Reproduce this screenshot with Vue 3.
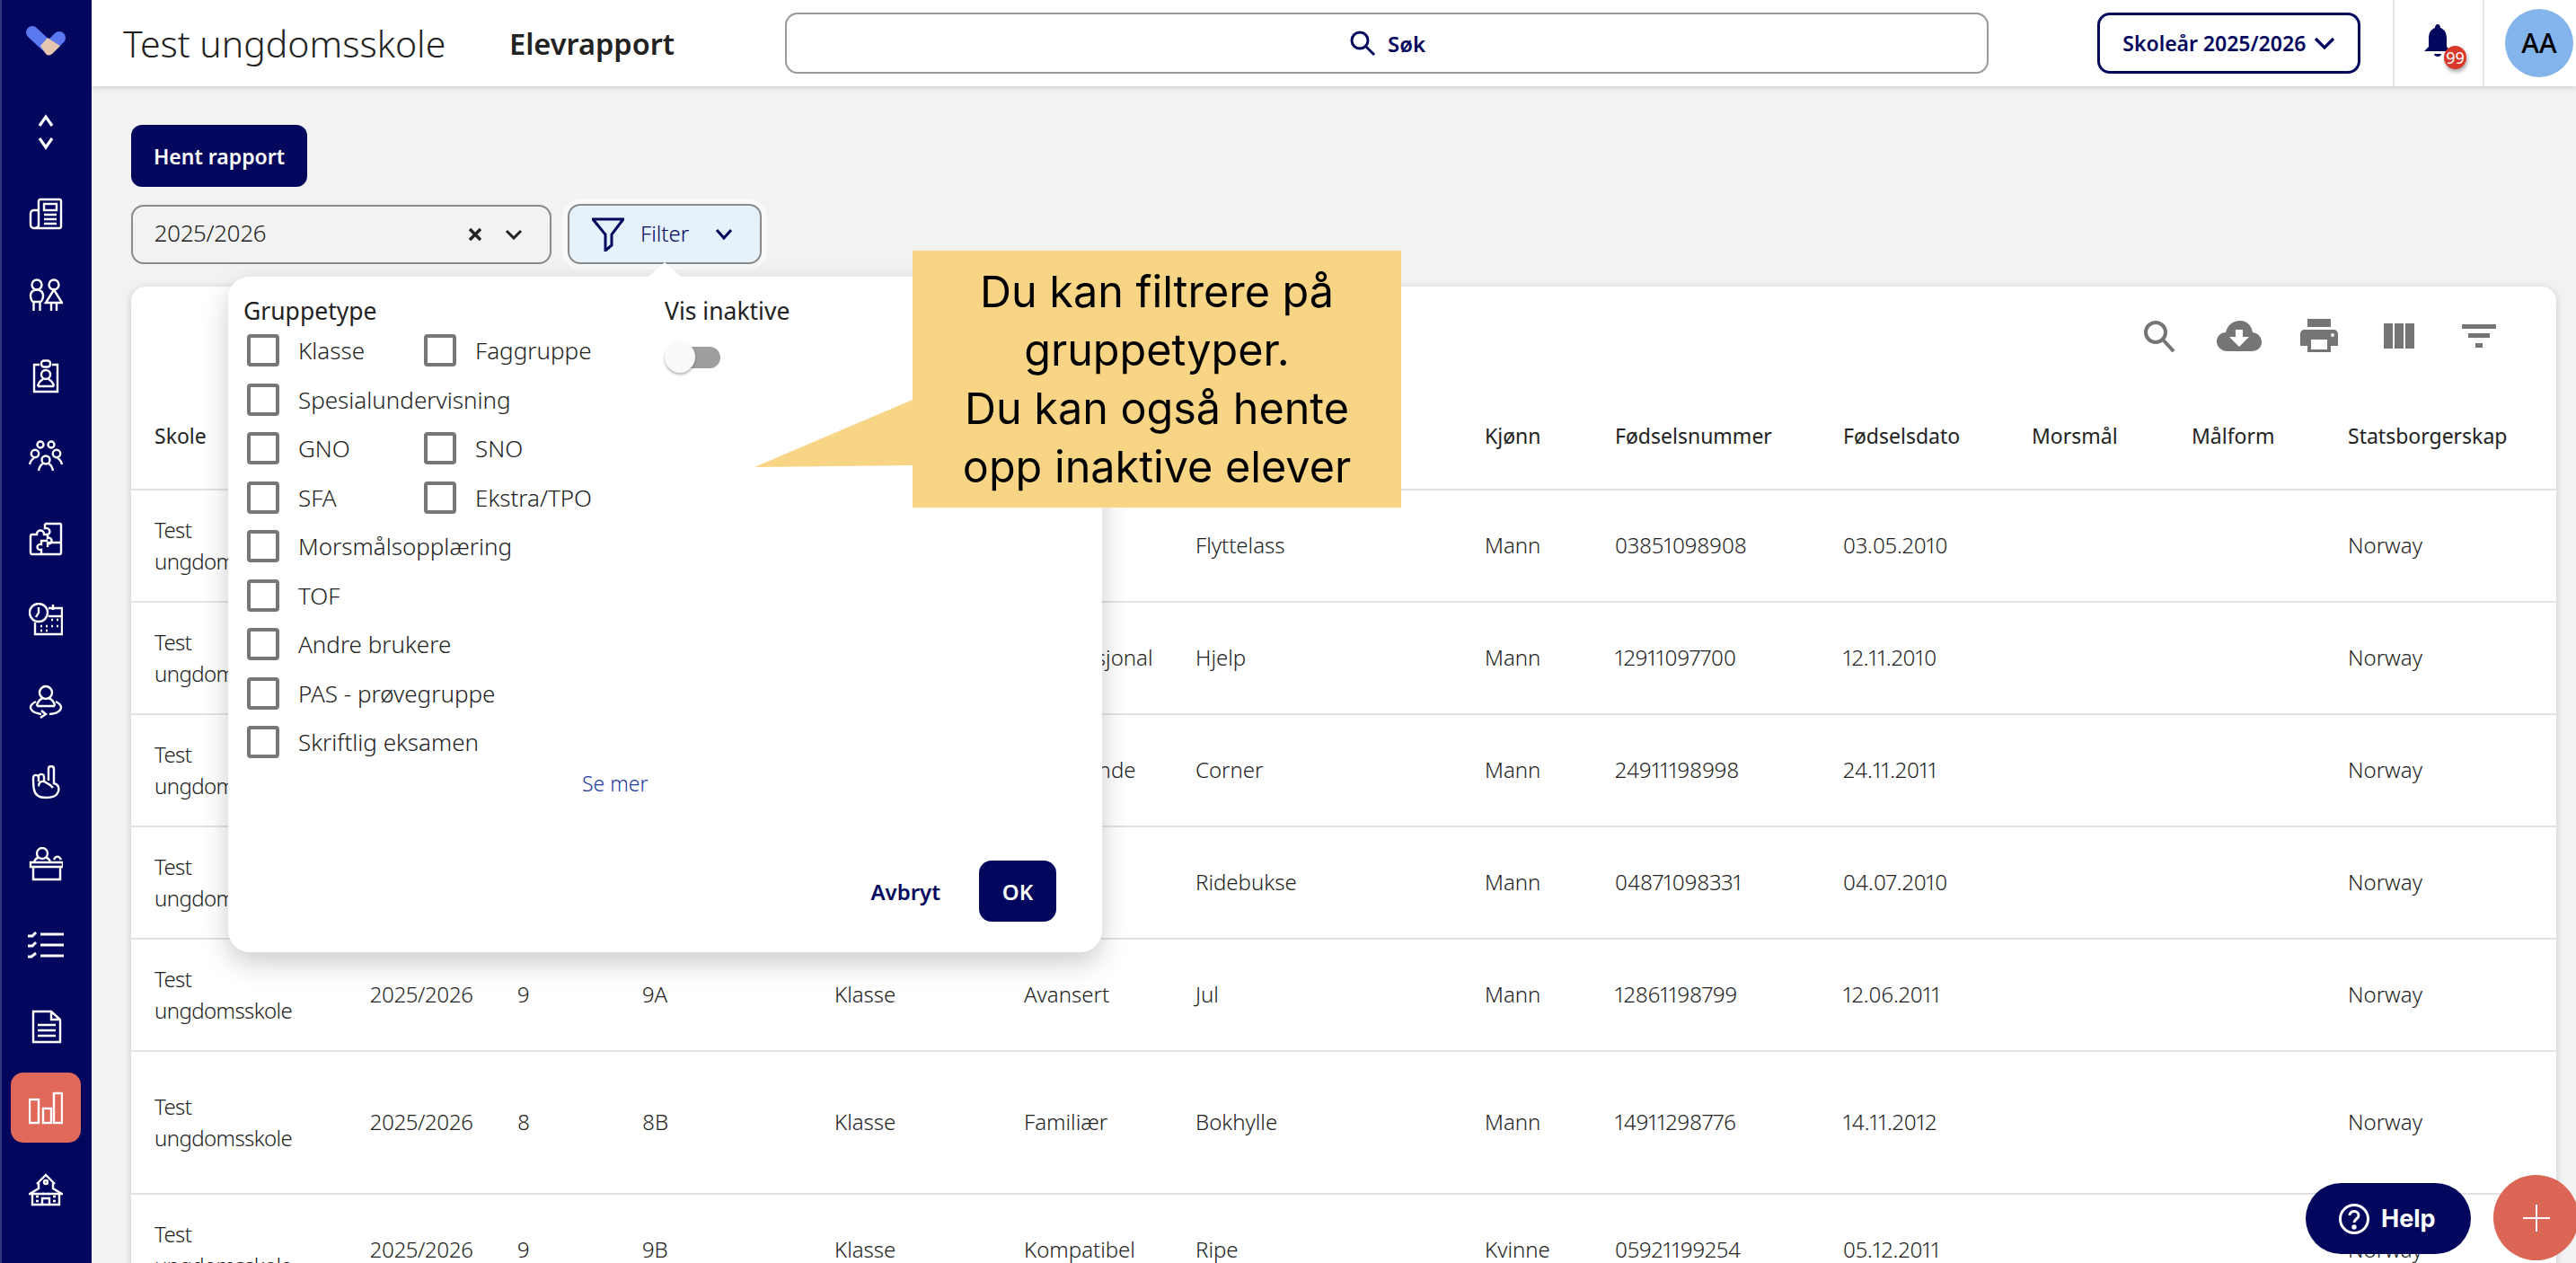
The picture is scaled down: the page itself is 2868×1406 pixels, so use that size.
<script setup>
const checkRows = [
  ['Klasse', 'Faggruppe'],
  ['Spesialundervisning'],
  ['GNO', 'SNO'],
  ['SFA', 'Ekstra/TPO'],
  ['Morsmålsopplæring'],
  ['TOF'],
  ['Andre brukere'],
  ['PAS - prøvegruppe'],
  ['Skriftlig eksamen'],
]
const heads = ['Skole', 'Skoleår', 'Trinn', 'Klasse', 'Gruppetype', 'Fornavn', 'Elevens etternavns', 'Kjønn', 'Fødselsnummer', 'Fødselsdato', 'Morsmål', 'Målform', 'Statsborgerskap']
const rows = [
  ['9', '9A', 'Klasse', 'Rask', 'Flyttelass', 'Mann', '03851098908', '03.05.2010'],
  ['9', '9B', 'Klasse', 'Internasjonal', 'Hjelp', 'Mann', '12911097700', '12.11.2010'],
  ['8', '8A', 'Klasse', 'Spennende', 'Corner', 'Mann', '24911198998', '24.11.2011'],
  ['9', '9A', 'Klasse', 'Digital', 'Ridebukse', 'Mann', '04871098331', '04.07.2010'],
  ['9', '9A', 'Klasse', 'Avansert', 'Jul', 'Mann', '12861198799', '12.06.2011'],
  ['8', '8B', 'Klasse', 'Familiær', 'Bokhylle', 'Mann', '14911298776', '14.11.2012'],
  ['9', '9B', 'Klasse', 'Kompatibel', 'Ripe', 'Kvinne', '05921199254', '05.12.2011'],
]
</script>

<template>
  <div class="app">
    <aside class="side">
      <div class="logo">
        <svg width="44" height="34" viewBox="0 0 44 34" fill="none">
          <path d="M7 7 L23 22" stroke="#5b78f0" stroke-width="14" stroke-linecap="round" />
          <path d="M37 13 L27 23" stroke="#5b78f0" stroke-width="14" stroke-linecap="round" />
          <path d="M16 22 L24 13 L30 17 L38 22 L29 31 Q25 34 22 31Z" fill="#e6c6b0" />
        </svg>
      </div>
      <div class="nav">
        <div class="nav-item">
          <svg width="20" height="40" viewBox="0 0 20 40" fill="none" stroke="#fff" stroke-width="3.200"><path d="M3 13 L10 3 L17 13" /><path d="M3 27 L10 37 L17 27" /></svg>
        </div>
        <div class="nav-item">
          <svg class="ic" viewBox="0 0 38 38"><path d="M11 33 V5 Q11 3 13 3 H34 Q36 3 36 5 V33 Q36 35 34 35 H6 Q2 35 2 31 V19 Q2 15 6 15 H11 M11 31 Q11 35 6 35" /><rect x="17" y="8" width="14" height="7" /><path d="M17 20 H31 M17 25 H31 M17 30 H31" /></svg>
        </div>
        <div class="nav-item">
          <svg class="ic" viewBox="0 0 38 38"><circle cx="9" cy="8" r="5.500" /><path d="M9 13.500 C4 13.500 2 17 2 20 C2 24 4 27 5 27 H13 C14 27 16 24 16 20 C16 17 14 13.500 9 13.500Z M5.500 27 V37 M12.500 27 V37" /><circle cx="28" cy="8" r="5.500" /><path d="M28 13.500 L19 28 H37Z M25 28 V37 M31 28 V37" /></svg>
        </div>
        <div class="nav-item">
          <svg class="ic" viewBox="0 0 38 38"><path d="M12 6 H6 V36 H32 V6 H26" /><rect x="14" y="1.500" width="10" height="7" rx="3" /><circle cx="19" cy="17" r="5" /><path d="M10 30 C11 24 15 23 16 22 M28 30 C27 24 23 23 22 22 M10 30 H28" /></svg>
        </div>
        <div class="nav-item">
          <svg class="ic" viewBox="0 0 38 38"><circle cx="13" cy="5" r="3.500" /><circle cx="25" cy="5" r="3.500" /><circle cx="7" cy="15" r="4.200" /><circle cx="31" cy="15" r="4.200" /><circle cx="19" cy="22" r="4.500" /><path d="M1 27 C2 23 4 21 6 20 M37 27 C36 23 34 21 32 20 M11 34 C12 29 14 27 16 26 M27 34 C26 29 24 27 22 26" /></svg>
        </div>
        <div class="nav-item">
          <svg class="ic" viewBox="0 0 38 38"><path d="M18 2 H35 Q36 2 36 4 V34 Q36 36 34 36 H4 Q2 36 2 34 V16 Q2 14 4 14 H9 C9 8 17 8 17 14 H21 V18 C27 16 27 26 21 24 V28 M18 2 V7 C25 6 25 15 19 14 M21 23 H36 M14 36 V31 C8 32 8 24 14 25 V21 H21" /></svg>
        </div>
        <div class="nav-item">
          <svg class="ic" viewBox="0 0 38 38"><circle cx="11" cy="11" r="10" /><path d="M11 5 V11 L8 16" /><path d="M22 6 H37 V35 H7 V22 M27 2 V8" /><path d="M22 15 H37" /><path d="M13 26 H15 M19 26 H21 M25 26 H27 M31 26 H33 M25 19 H27 M31 19 H33 M13 31 H15 M19 31 H21" /></svg>
        </div>
        <div class="nav-item">
          <svg class="ic" viewBox="0 0 38 38"><circle cx="19" cy="9" r="7" /><path d="M9 24 C10 17 14 16 16 15 M29 24 C28 17 24 16 22 15 M9 24 H29" /><path d="M8 19 C-2 24 1 31 14 33 M14 29 L19 33 L13 37" /><path d="M30 19 C40 24 37 32 23 33" /></svg>
        </div>
        <div class="nav-item">
          <svg class="ic" viewBox="0 0 38 38"><path d="M22 17 V4 C22 0 28 0 28 4 V20 C33 21 35 26 32 31 C30 35 26 36 19 36 C11 36 7 33 6 27 C5 24 5 18 5 14 C5 10 10 10 11 13 V12 C12 9 17 9 17 13 V18 C12 17 10 22 12 23 M11 13 V18 M17 18 C21 20 24 21 27 25" /></svg>
        </div>
        <div class="nav-item">
          <svg class="ic" viewBox="0 0 38 38"><circle cx="15" cy="7" r="6" /><path d="M6 17 C7 13 9 12 11 12 M24 17 C23 13 21 12 19 12 M28 14 C30 9 34 10 36 14" /><path d="M2 17 H38 V22 H2Z M5 22 V36 H35 V22" /></svg>
        </div>
        <div class="nav-item">
          <svg class="ic wide" viewBox="0 0 42 30"><path d="M15 3 H41 M15 15 H41 M15 27 H41" /><path d="M1 5 H6 L10 1 M1 16 H6 L10 12 M1 28 H5 L10 24" /></svg>
        </div>
        <div class="nav-item">
          <svg class="ic" viewBox="0 0 38 38"><path d="M5 2 H25 L35 11 V36 H5Z M25 2 V11 H35" /><path d="M10 17 H30 M10 23 H30 M10 29 H30" /></svg>
        </div>
        <div class="nav-item">
          <div class="active-bg">
            <svg class="ic" viewBox="0 0 38 38"><rect x="1" y="10" width="10" height="26" /><rect x="16" y="20" width="9" height="16" /><rect x="28" y="3" width="9" height="33" /></svg>
          </div>
        </div>
        <div class="nav-item">
          <svg class="ic" viewBox="0 0 38 38"><path d="M9 13 L19 3 L29 13 M11 12 V18 L1 24 H37 L27 18 V12" /><circle cx="19" cy="11" r="2" /><path d="M4 24 V36 H34 V24 M15 36 V29 H23 V36" /><path d="M8 27 H11 M8 32 H11 M27 27 H30 M27 32 H30 M15 24 H17 M21 24 H23" /></svg>
        </div>
      </div>
    </aside>

    <div class="content">
      <header class="top">
        <div class="school">Test ungdomsskole</div>
        <div class="page">Elevrapport</div>
        <div class="search">
          <svg width="32" height="32" viewBox="0 0 32 32" fill="none" stroke="#02075d" stroke-width="3"><circle cx="13" cy="13" r="9" /><path d="M20 20 L29 29" /></svg>
          <span>Søk</span>
        </div>
        <div class="year">
          <span>Skoleår 2025/2026</span>
          <svg width="24" height="14" viewBox="0 0 24 14" fill="none" stroke="#02075d" stroke-width="3.200"><path d="M2 2 L12 12 L22 2" /></svg>
        </div>
        <div class="bell-box">
          <svg width="32" height="40" viewBox="0 0 32 40" fill="#02075d"><path d="M16 1 C18 1 19 3 19 5 C24 7 26 11 26 17 V26 L31 31 H1 L6 26 V17 C6 11 8 7 13 5 C13 3 14 1 16 1Z" /><path d="M12 34 H20 C20 38 12 38 12 34Z" /></svg>
          <span class="badge">99</span>
        </div>
        <div class="avatar-box"><div class="avatar">AA</div></div>
      </header>

      <main class="main">
        <button class="btn-primary">Hent rapport</button>
        <div class="filters">
          <div class="select">
            <span class="select-value">2025/2026</span>
            <svg width="16" height="16" viewBox="0 0 16 16" fill="none" stroke="#222" stroke-width="3.400"><path d="M2 2 L14 14 M14 2 L2 14" /></svg>
            <svg width="20" height="12" viewBox="0 0 20 12" fill="none" stroke="#222" stroke-width="3"><path d="M2 2 L10 10 L18 2" /></svg>
          </div>
          <div class="filter-btn">
            <svg width="36" height="38" viewBox="0 0 36 38" fill="none" stroke="#02075d" stroke-width="3"><path d="M1 2 H35 L22 19 V31 L15 37 V19 Z" /></svg>
            <span>Filter</span>
            <svg width="20" height="14" viewBox="0 0 20 14" fill="none" stroke="#02075d" stroke-width="3"><path d="M2 2 L10 11 L18 2" /></svg>
          </div>
        </div>

        <section class="card">
          <div class="toolbar">
            <div class="tool"><svg width="36" height="36" viewBox="0 0 36 36" fill="none" stroke="#757575" stroke-width="4"><circle cx="14" cy="14" r="11" /><path d="M22 22 L34 35" /></svg></div>
            <div class="tool"><svg width="50" height="34" viewBox="0 0 50 34" fill="#757575"><path d="M12 34 C5 34 0 29 0 23 C0 17 5 13 10 13 C12 5 18 0 26 0 C34 0 39 6 40 13 C46 14 50 18 50 24 C50 30 45 34 39 34Z" /><path d="M21 10 H29 V18 H36 L25 29 L14 18 H21Z" fill="#fff" /></svg></div>
            <div class="tool"><svg width="42" height="38" viewBox="0 0 42 38" fill="#757575"><rect x="8" y="0" width="26" height="9" /><path d="M5 12 H37 C40 12 42 14 42 17 V30 H34 V37 H8 V30 H0 V17 C0 14 2 12 5 12Z" /><rect x="12" y="23" width="18" height="11" fill="#fff" /><circle cx="36" cy="18" r="2" fill="#fff" /></svg></div>
            <div class="tool"><svg width="34" height="28" viewBox="0 0 34 28" fill="#757575"><rect x="0" y="0" width="10" height="28" /><rect x="12" y="0" width="10" height="28" /><rect x="24" y="0" width="10" height="28" /></svg></div>
            <div class="tool"><svg width="38" height="26" viewBox="0 0 38 26" fill="#757575"><rect x="0" y="0" width="38" height="5" /><rect x="7" y="10" width="24" height="5" /><rect x="15" y="21" width="8" height="5" /></svg></div>
          </div>
          <div class="t-row t-head">
            <div v-for="h in heads" :key="h" class="cell">{{ h }}</div>
          </div>
          <div v-for="(r, i) in rows" :key="i" class="t-row t-body" :class="{ tall: i === 5 }">
            <div class="cell school-cell">Test<br />ungdomsskole</div>
            <div class="cell">2025/2026</div>
            <div v-for="(v, j) in r" :key="j" class="cell">{{ v }}</div>
            <div class="cell"></div>
            <div class="cell"></div>
            <div class="cell">Norway</div>
          </div>
        </section>
      </main>
    </div>

    <div class="popover">
      <span class="pop-arrow"></span>
      <div class="pop-body">
        <div class="pop-groups">
          <div class="pop-title">Gruppetype</div>
          <div class="checks">
            <div v-for="(row, i) in checkRows" :key="i" class="check-row">
              <label v-for="c in row" :key="c" class="check"><span class="box"></span><span>{{ c }}</span></label>
            </div>
          </div>
        </div>
        <div class="pop-inactive">
          <div class="pop-title">Vis inaktive</div>
          <div class="toggle"><span class="knob"></span></div>
        </div>
      </div>
      <a class="more">Se mer</a>
      <div class="pop-foot">
        <span class="cancel">Avbryt</span>
        <button class="ok">OK</button>
      </div>
    </div>

    <svg class="callout-tail" width="180" height="80" viewBox="0 0 180 80"><path d="M176 0 L0 75 L176 73Z" fill="#f8d584" /></svg>
    <div class="callout">Du kan filtrere på<br />gruppetyper.<br />Du kan også hente<br />opp inaktive elever</div>

    <div class="help">
      <svg width="36" height="36" viewBox="0 0 36 36" fill="none" stroke="#fff" stroke-width="3"><circle cx="18" cy="18" r="15.500" /><path d="M13 14 C13 8 23 8 23 14 C23 18 18 18 18 22" /><circle cx="18" cy="27" r="1.200" fill="#fff" /></svg>
      <span>Help</span>
    </div>
    <div class="fab">
      <svg width="32" height="32" viewBox="0 0 32 32" stroke="#fff" stroke-width="2"><path d="M1 16 H31 M16 1 V31" /></svg>
    </div>
  </div>
</template>

<style>
html, body { margin: 0; background: #f2f2f2; overflow: hidden; }
</style>

<style scoped>
.app {
  position: relative;
  display: flex;
  width: 2868px;
  height: 1406px;
  overflow: hidden;
  background: #f2f2f2;
  font-family: "Noto Sans", sans-serif;
  font-variant-numeric: proportional-nums;
  color: #222;
}
.side {
  flex: none;
  width: 102px;
  box-sizing: border-box;
  background: #02075d;
  border-left: 2px solid #33367f;
  display: flex;
  flex-direction: column;
  z-index: 3;
}
.logo { height: 102px; display: flex; justify-content: center; padding-top: 29px; box-sizing: border-box; margin-left: -2px; }
.nav-item { height: 90.500px; display: flex; align-items: center; justify-content: center; margin-left: -2px; }
.ic { width: 38px; height: 38px; fill: none; stroke: #fff; stroke-width: 2.400; }
.ic.wide { width: 42px; height: 30px; stroke-width: 3; }
.active-bg { width: 78px; height: 78px; border-radius: 14px; background: #e0695a; display: flex; align-items: center; justify-content: center; }

.content { flex: 1; min-width: 0; display: flex; flex-direction: column; }
.top {
  height: 96px;
  flex: none;
  background: #fff;
  box-shadow: 0 2px 6px rgba(0,0,0,.14);
  display: flex;
  align-items: center;
  position: relative;
  z-index: 2;
}
.school { width: 430px; margin-left: 35px; font-size: 41px; font-weight: 300; color: #222; white-space: nowrap; }
.page { width: 307px; font-size: 32.500px; font-weight: 600; color: #222; }
.search {
  width: 1340px;
  height: 68px;
  box-sizing: border-box;
  border: 2px solid #999;
  border-radius: 14px;
  display: flex;
  align-items: center;
  justify-content: center;
  gap: 12px;
  color: #02075d;
  font-size: 24px;
  font-weight: 600;
}
.year {
  margin-left: 121px;
  width: 293px;
  height: 68px;
  box-sizing: border-box;
  border: 3px solid #02075d;
  border-radius: 14px;
  display: flex;
  align-items: center;
  justify-content: center;
  gap: 8px;
  color: #02075d;
  font-size: 23px;
  font-weight: 600;
}
.bell-box {
  margin-left: 36px;
  width: 102px;
  height: 96px;
  box-sizing: border-box;
  border-left: 2px solid #e4e4e4;
  border-right: 2px solid #e4e4e4;
  position: relative;
  padding: 26px 0 0 32px;
}
.badge {
  position: absolute;
  left: 55px;
  top: 51px;
  width: 25px;
  height: 26px;
  border-radius: 50%;
  background: #d9392b;
  color: #fff;
  font-size: 18px;
  line-height: 26px;
  text-align: center;
  box-shadow: 1px 3px 4px rgba(0,0,0,.35);
}
.avatar-box { flex: 1; display: flex; justify-content: flex-end; padding-right: 3px; }
.avatar {
  width: 76px;
  height: 76px;
  border-radius: 50%;
  background: #84b4ec;
  color: #000;
  font-size: 30px;
  font-weight: 500;
  line-height: 76px;
  text-align: center;
}

.main { padding: 43px 22px 0 44px; }
.btn-primary {
  display: block;
  width: 196px;
  height: 69px;
  border: 0;
  border-radius: 12px;
  background: #02075d;
  color: #fff;
  font: 600 23px "Noto Sans", sans-serif;
  padding: 0;
}
.filters { display: flex; gap: 18px; margin-top: 19px; align-items: center; }
.select {
  width: 468px;
  height: 66px;
  box-sizing: border-box;
  border: 2px solid #8a8a8a;
  border-radius: 14px;
  display: flex;
  align-items: center;
  padding: 0 30px 3px 24px;
  gap: 25px;
  font-size: 26px;
  font-weight: 300;
}
.select svg { margin-top: 3px; }
.select-value { flex: 1; }
.filter-btn {
  width: 216px;
  height: 67px;
  box-sizing: border-box;
  border: 2px solid #8a8a8a;
  border-radius: 14px;
  background: #e6f2fb;
  box-shadow: 0 0 0 6px #f8f8f8;
  display: flex;
  align-items: center;
  padding: 0 30px 0 25px;
  color: #02075d;
  font-size: 24px;
  font-weight: 300;
}
.filter-btn span { margin-left: 18px; flex: 1; padding-bottom: 3px; }

.card {
  margin-top: 25px;
  background: #fff;
  border-radius: 16px 16px 0 0;
  box-shadow: 0 2px 8px rgba(0,0,0,.18);
  height: 1100px;
}
.toolbar { height: 108px; box-sizing: border-box; padding: 33px 42px 0 0; display: flex; justify-content: flex-end; }
.tool { width: 89px; height: 44px; display: flex; align-items: center; justify-content: center; }
.t-row {
  display: grid;
  grid-template-columns: 240px 164px 139px 214px 211px 191px 322px 145px 254px 210px 178px 174px 206px;
  height: 125px;
  box-sizing: border-box;
  padding-left: 26px;
  border-bottom: 2px solid #e2e2e2;
  align-items: center;
  font-size: 24px;
  line-height: 35px;
  font-weight: 300;
  color: #222;
}
.t-body { padding-bottom: 2px; }
.t-row.tall { height: 159px; }
.t-head { height: 119px; font-size: 23px; font-weight: 400; white-space: nowrap; }
.school-cell { letter-spacing: -0.600px; }

.popover {
  position: absolute;
  left: 254px;
  top: 308px;
  width: 973px;
  height: 752px;
  box-sizing: border-box;
  background: #fff;
  border-radius: 24px;
  box-shadow: 0 12px 30px rgba(0,0,0,.2);
  padding: 20px 51px 34px 17px;
  display: flex;
  flex-direction: column;
  z-index: 4;
}
.pop-arrow {
  position: absolute;
  left: 468px;
  top: -16px;
  width: 36px;
  height: 16px;
  background: #fff;
  clip-path: polygon(50% 0, 100% 100%, 0 100%);
}
.pop-body { display: flex; }
.pop-groups { width: 469px; }
.pop-title { font-size: 26.500px; line-height: 36px; font-weight: 400; color: #222; height: 44px; }
.checks { padding-left: 4px; }
.check-row { display: flex; height: 54.500px; }
.check { display: flex; width: 197px; height: 36px; white-space: nowrap; align-items: center; font-size: 26px; font-weight: 300; gap: 21px; }
.box { flex: none; width: 36px; height: 36px; box-sizing: border-box; border: 4px solid #767676; border-radius: 4px; }
.toggle { position: relative; width: 62px; height: 36px; margin-top: 8px; }
.toggle::before { content: ""; position: absolute; left: 6px; right: 0; top: 6px; height: 24px; border-radius: 12px; background: #9e9e9e; }
.knob { position: absolute; left: 0; top: 0; width: 34px; height: 35px; border-radius: 50%; background: #fafafa; box-shadow: 0 2px 3px rgba(0,0,0,.3); }
.more { display: block; margin: -9px 0 0 377px; color: #1f3a9e; font-size: 23px; font-weight: 300; line-height: 36px; }
.pop-foot { margin-top: auto; display: flex; justify-content: flex-end; align-items: center; gap: 43px; }
.cancel { color: #02075d; font-size: 24px; font-weight: 600; }
.ok { width: 86px; height: 68px; border: 0; border-radius: 14px; background: #02075d; color: #fff; font: 600 24px "Noto Sans", sans-serif; padding: 0; }

.callout-tail { position: absolute; left: 840px; top: 445px; z-index: 5; }
.callout {
  position: absolute;
  left: 1016px;
  top: 279px;
  width: 544px;
  height: 286px;
  box-sizing: border-box;
  padding-top: 13px;
  background: #f8d584;
  color: #000;
  font-family: Inter, sans-serif;
  font-size: 48.500px;
  line-height: 65px;
  text-align: center;
  z-index: 5;
}

.help {
  position: absolute;
  left: 2567px;
  top: 1317px;
  width: 184px;
  height: 79px;
  border-radius: 40px;
  background: #02075d;
  color: #fff;
  display: flex;
  align-items: center;
  gap: 12px;
  box-sizing: border-box;
  padding-left: 36px;
  font-family: Inter, sans-serif;
  font-size: 27px;
  font-weight: 700;
  z-index: 6;
}
.fab {
  position: absolute;
  left: 2776px;
  top: 1308px;
  width: 95px;
  height: 95px;
  border-radius: 50%;
  background: #dc6655;
  display: flex;
  align-items: center;
  justify-content: center;
  z-index: 6;
}
</style>
